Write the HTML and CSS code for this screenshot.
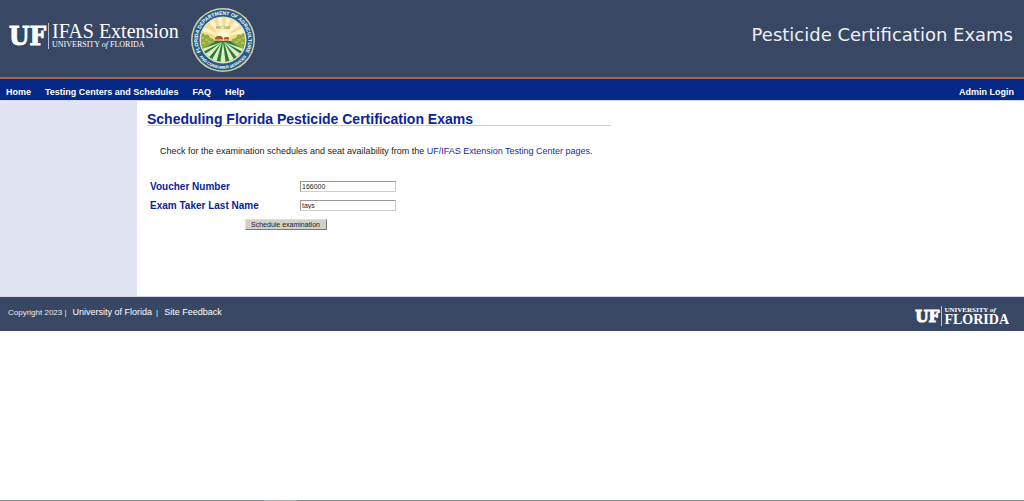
FILE: index.html
```
<!DOCTYPE html>
<html lang="en">

<head>
  <meta charset="utf-8">
  <meta name="viewport" content="width=device-width, initial-scale=1">
  <title>Pesticide Certification Exams</title>
  <link rel="stylesheet" href="styles.css">
</head>

<body>
  <header class="banner">
    <div class="logos">
      <div class="logo">
        <span class="logo-uf">UF</span>
        <span class="logo-name">
          <span class="logo-unit">IFAS Extension</span>
          <span class="logo-school">UNIVERSITY <i>of</i> FLORIDA</span>
        </span>
      </div>
      <svg class="seal" viewBox="0 0 64 64" role="img" aria-label="Florida Department of Agriculture and Consumer Services">
        <defs>
          <clipPath id="scene"><circle cx="32" cy="32" r="22"/></clipPath>
          <path id="arc-top" d="M9.3 43 A25.2 25.2 0 1 1 54.7 43"/>
          <path id="arc-bottom" d="M4.5 40 A28.6 28.6 0 0 0 59.5 40"/>
        </defs>
        <circle cx="32" cy="32" r="32" fill="#d5d0a0"/>
        <circle cx="32" cy="32" r="30.5" fill="#275d8c"/>
        <circle cx="32" cy="32" r="23.5" fill="#e8e4bc"/>
        <g clip-path="url(#scene)">
          <rect x="8" y="8" width="48" height="48" fill="#f8d990"/>
          <path d="M32 29 L8 22 V16z M32 29 L13 10 L19 6z M32 29 L25 7 H31z M32 29 L36 7 H42z M32 29 L48 8 L54 14z M32 29 L57 18 V24z" fill="#fff5cf"/>
          <circle cx="32" cy="27" r="8" fill="#fff1a0"/>
          <circle cx="32" cy="27" r="5" fill="#fffad8"/>
          <rect x="8" y="33" width="48" height="24" fill="#287c38"/>
          <path d="M8 27 q3 -4 6 0 q4 -2 5 3 q4 0 5 4 L8 43z" fill="#91ae43"/>
          <path d="M56 27 q-3 -4 -6 0 q-4 -2 -5 3 q-4 0 -5 4 L56 43z" fill="#91ae43"/>
          <path d="M10 30h3M14 32h3M10 35h4M17 34h3M54 30h-3M50 32h-3M54 35h-4M47 34h-3" stroke="#e5cf55" stroke-width="1"/>
          <path d="M31 34 L8 42 V46z M31 34 L10 49 L15 53z M31 34 L19 55 H25z M32 34 L29 57 H35z M33 34 L39 55 H45z M33 34 L49 53 L54 49z M33 34 L56 46 V42z" fill="#e3edc5"/>
          <path d="M24 30 l2 -2 h4 l2 2 v3 h-8z M33 30 l1 -1 h3 l1 1 v3 h-5z" fill="#a85b2c"/>
          <path d="M24 32h14" stroke="#f6e7c4" stroke-width="1"/>
        </g>
        <text class="seal-text"><textPath href="#arc-top" startOffset="50%">FLORIDA DEPARTMENT OF AGRICULTURE</textPath></text>
        <text class="seal-text seal-lower"><textPath href="#arc-bottom" startOffset="50%">AND CONSUMER SERVICES</textPath></text>
        <text class="seal-date" x="32" y="21">EST. 1868</text>
      </svg>
    </div>
    <div class="site-name">Pesticide Certification Exams</div>
  </header>

  <nav class="menu">
    <a href="#">Home</a>
    <a href="#">Testing Centers and Schedules</a>
    <a href="#">FAQ</a>
    <a href="#">Help</a>
    <a href="#" class="login">Admin Login</a>
  </nav>

  <div class="columns">
    <aside class="sidebar"></aside>
    <main class="content">
      <h1>Scheduling Florida Pesticide Certification Exams</h1>
      <p>Check for the examination schedules and seat availability from the <a href="#">UF/IFAS Extension Testing Center pages</a>.</p>
      <form onsubmit="return false">
        <label for="voucher">Voucher Number</label>
        <input type="text" id="voucher" value="166000">
        <label for="lastname">Exam Taker Last Name</label>
        <input type="text" id="lastname" value="tays">
        <button type="submit">Schedule examination</button>
      </form>
    </main>
  </div>

  <footer class="footer">
    <div class="copyright">
      <span>Copyright 2023 |</span>
      <a href="#">University of Florida</a>
      <span>|</span>
      <a href="#">Site Feedback</a>
    </div>
    <div class="logo logo-small">
      <span class="logo-uf">UF</span>
      <span class="logo-name">
        <span class="logo-school">UNIVERSITY <i>of</i></span>
        <span class="logo-unit">FLORIDA</span>
      </span>
    </div>
  </footer>

  <div class="page-end"><span></span></div>
</body>

</html>
```

FILE: styles.css
```
* {
  box-sizing: border-box;
}

body {
  display: flex;
  flex-direction: column;
  min-height: 100vh;
  margin: 0;
  background-color: white;
  font-family: "Liberation Sans", Arial, sans-serif;
  font-size: 9px;
  color: #222;
}

a {
  color: #1a2c9c;
  text-decoration: none;
}

.banner {
  display: flex;
  justify-content: space-between;
  height: 79px;
  padding: 8px 11px 0 9px;
  border-bottom: 2px solid #b5613f;
  background-color: #384764;
  color: white;
}

.logos {
  display: flex;
  align-items: flex-start;
  gap: 14px;
}

.logo {
  display: flex;
  align-items: center;
  color: white;
  font-family: "Liberation Serif", serif;
}

.banner .logo {
  width: 168px;
  height: 56px;
}

.logo-uf {
  margin-right: 2px;
  font-family: "DejaVu Serif Condensed", "DejaVu Serif", serif;
  font-stretch: condensed;
  font-size: 26px;
  font-weight: bold;
  line-height: 26px;
  -webkit-text-stroke: 1px white;
}

.logo-name {
  display: flex;
  flex-direction: column;
  padding-left: 3px;
  border-left: 1px solid #b9c0cc;
  white-space: nowrap;
}

.logo-unit {
  font-size: 20px;
  line-height: 17px;
}

.logo-school {
  font-size: 8px;
  line-height: 9px;
}

.seal {
  width: 64px;
  height: 64px;
}

.seal-text {
  fill: white;
  font-family: "Liberation Sans", sans-serif;
  font-size: 5px;
  font-weight: bold;
  text-anchor: middle;
}

.seal-lower {
  font-size: 4px;
}

.seal-date {
  fill: #777044;
  font-size: 3px;
  text-anchor: middle;
}

.site-name {
  margin-top: 16px;
  font-family: "DejaVu Sans", sans-serif;
  font-size: 18px;
  line-height: 22px;
  color: #eef0f4;
}

.menu {
  display: flex;
  align-items: center;
  gap: 14px;
  height: 21px;
  padding: 4px 10px 0 6px;
  background-color: #062886;
  font-weight: bold;
}

.menu a {
  color: white;
}

.menu .login {
  margin-left: auto;
}

.columns {
  display: flex;
  min-height: 197px;
  border-top: 1px solid #d5d9ec;
  border-bottom: 1px solid #d5d9ec;
}

.sidebar {
  flex: 0 0 137px;
  background-color: #e1e4f3;
}

.content {
  flex: 0 1 484px;
  padding: 9px 10px;
}

h1 {
  height: 16px;
  margin: 0;
  border-bottom: 1px solid #f2c3a8;
  font-size: 14px;
  line-height: 18px;
  color: #0a2599;
}

p {
  margin: 19px 0 24px 13px;
  line-height: 12px;
}

form {
  display: grid;
  grid-template-columns: 150px 96px;
  grid-auto-rows: 11px;
  gap: 8px 0;
  align-items: center;
  margin-left: 3px;
}

label {
  font-size: 10px;
  font-weight: bold;
  line-height: 11px;
  color: #0a2599;
}

input {
  width: 96px;
  height: 11px;
  margin: 0;
  padding: 0 1px;
  border: 1px solid #ccc;
  border-top-color: #999;
  border-left-color: #999;
  font-family: inherit;
  font-size: 7px;
  color: #222;
}

button {
  grid-column: 1 / -1;
  justify-self: center;
  width: 82px;
  height: 11px;
  margin-left: 25px;
  padding: 0;
  border: 1px solid #777;
  border-top-color: #ddd;
  border-left-color: #ddd;
  background-color: #d4d0c8;
  font-family: inherit;
  font-size: 7px;
  line-height: 9px;
  color: #222;
}

.footer {
  display: flex;
  align-items: center;
  justify-content: space-between;
  height: 34px;
  padding: 0 15px 0 8px;
  background-color: #384764;
  color: #e6e9ef;
}

.copyright {
  display: flex;
  align-items: baseline;
  gap: 4px;
  margin-bottom: 5px;
  font-size: 8px;
}

.copyright a {
  margin-left: 2px;
  font-size: 9px;
  color: white;
}

.logo-small {
  margin-top: 4px;
}

.logo-small .logo-uf {
  font-size: 17px;
  line-height: 18px;
}

.logo-small .logo-name {
  padding-left: 2px;
}

.logo-small .logo-unit {
  font-size: 14px;
  font-weight: bold;
  line-height: 12px;
}

.logo-small .logo-school {
  font-size: 7px;
  font-weight: bold;
  line-height: 8px;
}

.page-end {
  height: 1px;
  margin-top: auto;
  background-color: #80929a;
}

.page-end span {
  display: block;
  width: 33px;
  height: 1px;
  margin-left: 264px;
  background-color: #9dacb2;
}
```
